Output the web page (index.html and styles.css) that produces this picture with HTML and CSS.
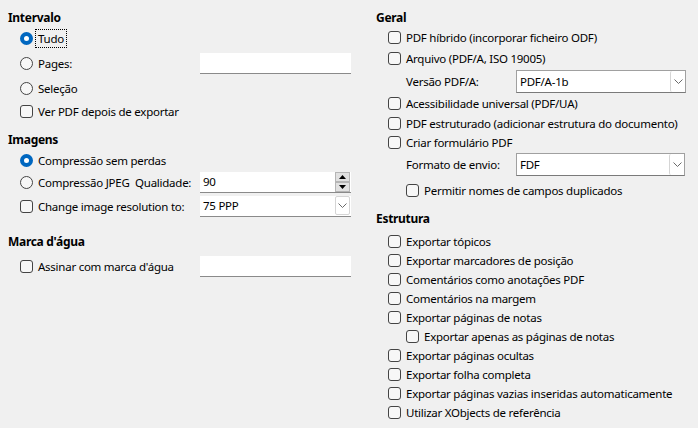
FILE: index.html
```html
<!DOCTYPE html>
<html lang="pt">
<head>
<meta charset="utf-8">
<title>Exportar PDF</title>
<link rel="stylesheet" href="styles.css">
</head>
<body>
<div class="page">
  <div class="col left">
    <div class="heading h-first">Intervalo</div>
    <div class="row r22 ind">
      <span class="radio on"></span><span class="lbl focus">Tudo</span>
    </div>
    <div class="row r28 ind">
      <span class="radio"></span><span class="lbl w-label">Pages:</span>
      <span class="field w151"></span>
    </div>
    <div class="row r22 ind">
      <span class="radio"></span><span class="lbl">Seleção</span>
    </div>
    <div class="row r24 ind">
      <span class="check"></span><span class="lbl">Ver PDF depois de exportar</span>
    </div>

    <div class="heading h-sec">Imagens</div>
    <div class="row r22 ind">
      <span class="radio on"></span><span class="lbl">Compressão sem perdas</span>
    </div>
    <div class="row r22 ind">
      <span class="radio"></span><span class="lbl w-label">Compressão JPEG&nbsp; Qualidade:</span>
      <span class="field w151 spin"><span class="val">90</span>
        <span class="spinbtns">
          <span class="sbtn"><svg width="7" height="4" viewBox="0 0 7 4"><path d="M3.5 0 L7 4 L0 4 Z" fill="#000"/></svg></span>
          <span class="sbtn"><svg width="7" height="4" viewBox="0 0 7 4"><path d="M0 0 L7 0 L3.5 4 Z" fill="#000"/></svg></span>
        </span>
      </span>
    </div>
    <div class="row r26 ind">
      <span class="check"></span><span class="lbl w-label">Change image resolution to:</span>
      <span class="field w151 combo"><span class="val">75 PPP</span>
        <span class="arrow"><svg width="9" height="5" viewBox="0 0 9 5"><path d="M0.5 0.5 L4.5 4.5 L8.5 0.5" stroke="#6a6a6a" stroke-width="1" fill="none"/></svg></span>
      </span>
    </div>

    <div class="heading h-sec2">Marca d'água</div>
    <div class="row r26 ind">
      <span class="check"></span><span class="lbl w-label">Assinar com marca d'água</span>
      <span class="field w151"></span>
    </div>
  </div>

  <div class="col right">
    <div class="heading h-first">Geral</div>
    <div class="row r20 ind"><span class="check"></span><span class="lbl">PDF híbrido (incorporar ficheiro ODF)</span></div>
    <div class="row r22 ind"><span class="check"></span><span class="lbl">Arquivo (PDF/A, ISO 19005)</span></div>
    <div class="row r24 ind2">
      <span class="lbl w-rlabel">Versão PDF/A:</span>
      <span class="field boxed w170 combo"><span class="val">PDF/A-1b</span>
        <span class="arrow"><svg width="9" height="5" viewBox="0 0 9 5"><path d="M0.5 0.5 L4.5 4.5 L8.5 0.5" stroke="#6a6a6a" stroke-width="1" fill="none"/></svg></span>
      </span>
    </div>
    <div class="row r20 ind"><span class="check"></span><span class="lbl">Acessibilidade universal (PDF/UA)</span></div>
    <div class="row r20 ind"><span class="check"></span><span class="lbl">PDF estruturado (adicionar estrutura do documento)</span></div>
    <div class="row r19 ind"><span class="check"></span><span class="lbl">Criar formulário PDF</span></div>
    <div class="row r24 ind2">
      <span class="lbl w-rlabel">Formato de envio:</span>
      <span class="field boxed w169 combo"><span class="val">FDF</span>
        <span class="arrow"><svg width="9" height="5" viewBox="0 0 9 5"><path d="M0.5 0.5 L4.5 4.5 L8.5 0.5" stroke="#6a6a6a" stroke-width="1" fill="none"/></svg></span>
      </span>
    </div>
    <div class="row r24 ind2 pushdown"><span class="check"></span><span class="lbl">Permitir nomes de campos duplicados</span></div>

    <div class="heading h-sec3">Estrutura</div>
    <div class="list">
      <div class="row r19 ind"><span class="check"></span><span class="lbl">Exportar tópicos</span></div>
      <div class="row r19 ind"><span class="check"></span><span class="lbl">Exportar marcadores de posição</span></div>
      <div class="row r19 ind"><span class="check"></span><span class="lbl">Comentários como anotações PDF</span></div>
      <div class="row r19 ind"><span class="check"></span><span class="lbl">Comentários na margem</span></div>
      <div class="row r19 ind"><span class="check"></span><span class="lbl">Exportar páginas de notas</span></div>
      <div class="row r19 ind2"><span class="check"></span><span class="lbl">Exportar apenas as páginas de notas</span></div>
      <div class="row r19 ind"><span class="check"></span><span class="lbl">Exportar páginas ocultas</span></div>
      <div class="row r19 ind"><span class="check"></span><span class="lbl">Exportar folha completa</span></div>
      <div class="row r19 ind"><span class="check"></span><span class="lbl">Exportar páginas vazias inseridas automaticamente</span></div>
      <div class="row r19 ind"><span class="check"></span><span class="lbl">Utilizar XObjects de referência</span></div>
    </div>
  </div>
</div>
</body>
</html>
```

FILE: styles.css
```css
html, body {
  margin: 0;
  padding: 0;
  background: #f0f0f0;
}
body {
  width: 698px;
  height: 428px;
  overflow: hidden;
  font-family: "Noto Sans", "Open Sans", sans-serif;
  font-size: 11.5px;
  letter-spacing: -0.25px;
  color: #000;
}
.page {
  display: grid;
  grid-template-columns: 368px 330px;
}
.col {
  display: flex;
  flex-direction: column;
}
.left { padding-left: 8px; }
.right { padding-left: 8px; }

.heading {
  height: 20px;
  display: flex;
  align-items: center;
  font-weight: bold;
  font-size: 12px;
  letter-spacing: -0.3px;
}
.h-first { margin-top: 7px; }
.h-sec { margin-top: 6px; }
.h-sec2 { margin-top: 12px; margin-bottom: 2px; }
.h-sec3 { margin-top: 6px; margin-bottom: 4px; }

.row {
  display: flex;
  align-items: center;
}
.r19 { height: 19px; }
.r20 { height: 20px; }
.r22 { height: 22px; }
.r24 { height: 24px; }
.r26 { height: 26px; }
.r28 { height: 28px; }
.pushdown { margin-top: 2px; }

.ind { padding-left: 12px; }
.ind2 { padding-left: 30px; }

.lbl {
  margin-left: 5px;
  white-space: nowrap;
}
.focus {
  margin-left: 4px;
  outline: 1px dotted #000;
  outline-offset: 1px;
  padding: 0 1px;
}
.w-label { width: 162px; }
.right .w-rlabel { width: 110px; margin-left: 0; }

.radio {
  width: 11px;
  height: 11px;
  border: 1px solid #444;
  border-radius: 50%;
  box-sizing: content-box;
  flex: none;
  background: #f7f7f7;
}
.radio.on {
  width: 5px;
  height: 5px;
  border: 4px solid #0067c0;
  background: #fff;
}
.check {
  width: 11px;
  height: 11px;
  border: 1px solid #444;
  border-radius: 3px;
  box-sizing: content-box;
  flex: none;
  background: #f7f7f7;
}

.field {
  height: 20px;
  background: #fff;
  border-bottom: 1px solid #8a8a8a;
  display: flex;
  align-items: center;
  position: relative;
  box-sizing: content-box;
}
.w151 { width: 151px; }
.w170 { width: 168px; }
.w169 { width: 167px; }
.boxed {
  height: 21px;
  border: 1px solid #a0a0a0;
  border-bottom-color: #7a7a7a;
}
.val {
  padding-left: 3px;
  flex: 1;
}
.combo .arrow {
  width: 15px;
  height: 19px;
  margin-right: 1px;
  border: 1px solid #d5d5d5;
  border-radius: 2px;
  background: #fff;
  display: flex;
  align-items: center;
  justify-content: center;
  box-sizing: border-box;
}
.boxed .arrow {
  margin-right: 0;
  height: 21px;
  border-top: none;
  border-bottom: none;
  border-right: none;
}
.spinbtns {
  display: flex;
  flex-direction: column;
  margin-right: 1px;
}
.sbtn {
  width: 15px;
  height: 10px;
  background: #e1e1e1;
  border: 1px solid #b5b5b5;
  box-sizing: border-box;
  display: flex;
  align-items: center;
  justify-content: center;
}
```
